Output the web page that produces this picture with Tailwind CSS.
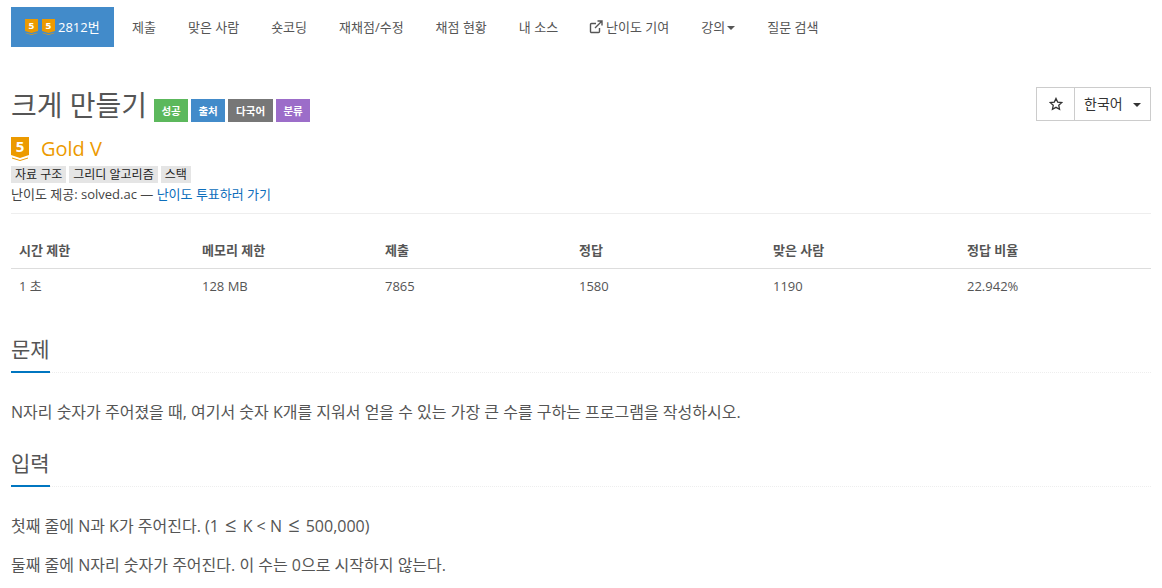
<!DOCTYPE html>
<html lang="ko">
<head>
<meta charset="UTF-8">
<title>2812번: 크게 만들기</title>
<script src="https://cdn.jsdelivr.net/npm/@tailwindcss/browser@4"></script>
</head>
<body class="bg-white text-[14px] leading-[20px] text-[#555] font-['Open_Sans','Noto_Sans_CJK_KR',sans-serif] overflow-hidden h-[588px]">

<div class="px-[11px]">
    <!-- tabs -->
    <nav class="flex h-[40px] mt-[7px] text-[13px] text-[#555]">
        <a class="flex items-center gap-[4px] w-[103px] pl-[14px] bg-[#428bca] text-white">
            <svg class="w-[13px] h-[16px]" viewBox="0 0 18 24" preserveAspectRatio="none"><path fill="#ec9a00" d="M0 0h18v18l-9 3-9-3z"/><path fill="#ec9a00" d="M1 20.5l8 2.5 8-2.5v1l-8 2.5-8-2.5z"/><text x="9" y="14.5" font-size="14" font-weight="700" fill="#fff" text-anchor="middle">5</text></svg>
            <svg class="w-[13px] h-[16px]" viewBox="0 0 18 24" preserveAspectRatio="none"><path fill="#ec9a00" d="M0 0h18v18l-9 3-9-3z"/><path fill="#ec9a00" d="M1 20.5l8 2.5 8-2.5v1l-8 2.5-8-2.5z"/><text x="9" y="14.5" font-size="14" font-weight="700" fill="#fff" text-anchor="middle">5</text></svg>
            <span class="-ml-[1px]">2812번</span>
        </a>
        <a class="flex items-center ml-[18px]">제출</a>
        <a class="flex items-center ml-[32px]">맞은 사람</a>
        <a class="flex items-center ml-[32px]">숏코딩</a>
        <a class="flex items-center ml-[32px]">재채점/수정</a>
        <a class="flex items-center ml-[32px]">채점 현황</a>
        <a class="flex items-center ml-[32px]">내 소스</a>
        <a class="flex items-center gap-[3px] ml-[31px]">
            <svg class="w-[14px] h-[14px]" viewBox="0 0 14 14" fill="none" stroke="#555" stroke-width="1.4"><path d="M10.5 8v3.5a1 1 0 0 1-1 1h-7a1 1 0 0 1-1-1v-7a1 1 0 0 1 1-1H7"/><path d="M8.5 1h4.5v4.5M13 1 6 8"/></svg>
            난이도 기여
        </a>
        <a class="flex items-center ml-[32px]">강의<span class="ml-[2px] mt-[2px] border-x-[4px] border-t-[4px] border-x-transparent border-t-[#555]"></span></a>
        <a class="flex items-center ml-[32px]">질문 검색</a>
    </nav>

    <!-- title -->
    <div class="flex items-start justify-between mt-[40px]">
        <div class="flex items-end">
            <h1 class="text-[28px] leading-[36px] text-[#555]">크게 만들기</h1>
            <div class="flex gap-[3px] ml-[7px] mb-[1px] text-[10.5px] font-bold text-white">
                <span class="flex items-center justify-center w-[34px] h-[23px] bg-[#5cb85c]">성공</span>
                <span class="flex items-center justify-center w-[34px] h-[23px] bg-[#428bca]">출처</span>
                <span class="flex items-center justify-center w-[45px] h-[23px] bg-[#777]">다국어</span>
                <span class="flex items-center justify-center w-[34px] h-[23px] bg-[#9c6dc9]">분류</span>
            </div>
        </div>
        <div class="flex h-[34px] border border-[#ccc] text-[#333]">
            <span class="flex items-center justify-center w-[38px] border-r border-[#ccc]">
                <svg class="w-[14px] h-[14px]" viewBox="0 0 24 24" fill="none" stroke="#333" stroke-width="2.2" stroke-linejoin="miter"><path d="M12 2.5l2.9 6.3 6.9.8-5.1 4.7 1.4 6.8-6.1-3.4-6.1 3.4 1.4-6.8L2.2 9.6l6.9-.8z"/></svg>
            </span>
            <span class="flex items-center w-[75px] pl-[9px]">한국어<span class="ml-[10px] mt-[2px] border-x-[4px] border-t-[4px] border-x-transparent border-t-[#333]"></span></span>
        </div>
    </div>

    <!-- tier -->
    <div class="flex items-center gap-[12px] mt-[13px] h-[26px] text-[20px] text-[#ec9a00]">
        <svg class="w-[18px] h-[24px]" viewBox="0 0 18 24"><path fill="#ec9a00" d="M0 0h18v18l-9 3-9-3z"/><path fill="#ec9a00" d="M1 20.5l8 2.5 8-2.5v1l-8 2.5-8-2.5z"/><text x="9" y="14.5" font-size="15" font-weight="700" fill="#fff" text-anchor="middle">5</text></svg>
        <span>Gold V</span>
    </div>
    <div class="flex gap-[3px] mt-[4px] text-[12px] leading-[17px] text-[#222]">
        <span class="px-[4px] bg-[#e5e5e5]">자료 구조</span>
        <span class="px-[4px] bg-[#e5e5e5]">그리디 알고리즘</span>
        <span class="px-[4px] bg-[#e5e5e5]">스택</span>
    </div>
    <p class="text-[13px] leading-[20px] mt-[1px] text-[#444]">난이도 제공: solved.ac — <a class="text-[#0d6ebc]">난이도 투표하러 가기</a></p>
    <div class="border-t border-[#eee] mt-[9px]"></div>

    <!-- info table -->
    <table class="w-full mt-[17px] text-[13px] table-fixed">
        <thead>
            <tr class="border-b border-[#ddd] text-left">
                <th class="w-[183px] h-[37px] pl-[8px] pt-[1px] font-bold">시간 제한</th>
                <th class="w-[183px] pl-[8px] pt-[1px] font-bold">메모리 제한</th>
                <th class="w-[194px] pl-[8px] pt-[1px] font-bold">제출</th>
                <th class="w-[194px] pl-[8px] pt-[1px] font-bold">정답</th>
                <th class="w-[194px] pl-[8px] pt-[1px] font-bold">맞은 사람</th>
                <th class="pl-[8px] pt-[1px] font-bold">정답 비율</th>
            </tr>
        </thead>
        <tbody>
            <tr>
                <td class="h-[36px] pl-[8px]">1 초</td>
                <td class="pl-[8px]">128 MB</td>
                <td class="pl-[8px]">7865</td>
                <td class="pl-[8px]">1580</td>
                <td class="pl-[8px]">1190</td>
                <td class="pl-[8px]">22.942%</td>
            </tr>
        </tbody>
    </table>

    <!-- problem -->
    <section class="mt-[31px]">
        <div class="border-b border-dotted border-[#eee] h-[38px]">
            <h2 class="inline-block h-[38px] text-[21px] leading-[28px] text-[#555] border-b-2 border-[#0076c0]">문제</h2>
        </div>
        <p class="mt-[28px] text-[16px] leading-[22px]">N자리 숫자가 주어졌을 때, 여기서 숫자 K개를 지워서 얻을 수 있는 가장 큰 수를 구하는 프로그램을 작성하시오.</p>
    </section>

    <section class="mt-[26px]">
        <div class="border-b border-dotted border-[#eee] h-[38px]">
            <h2 class="inline-block h-[38px] text-[21px] leading-[28px] text-[#555] border-b-2 border-[#0076c0]">입력</h2>
        </div>
        <p class="mt-[28px] text-[16px] leading-[22px]">첫째 줄에 N과 K가 주어진다. (1 <span class="mx-[2px] text-[20px] leading-none">≤</span> K &lt; N <span class="mx-[2px] text-[20px] leading-none">≤</span> 500,000)</p>
        <p class="mt-[17px] text-[16px] leading-[22px]">둘째 줄에 N자리 숫자가 주어진다. 이 수는 0으로 시작하지 않는다.</p>
    </section>
</div>

</body>
</html>
